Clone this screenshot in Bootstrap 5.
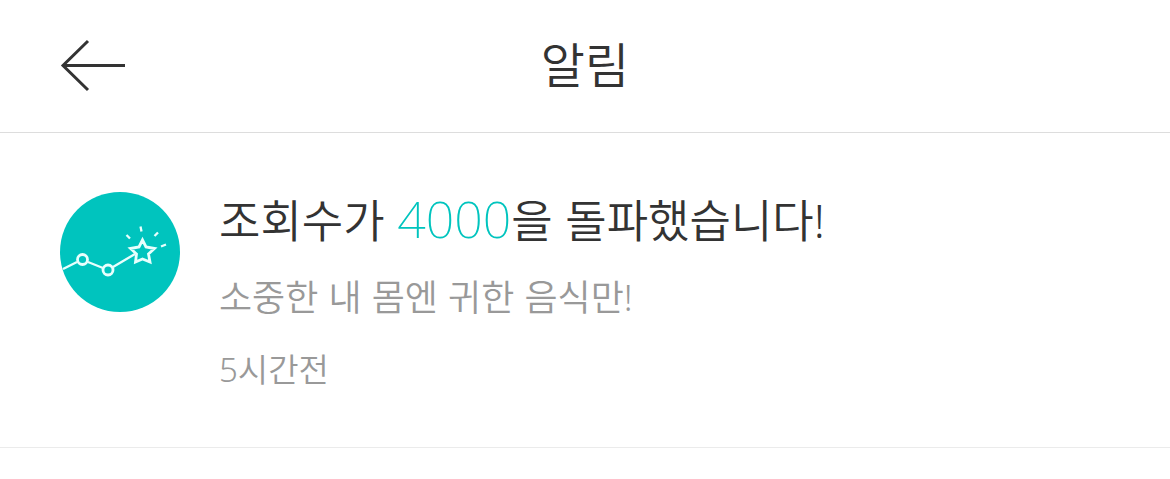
<!DOCTYPE html>
<html lang="ko">
<head>
<meta charset="utf-8">
<meta name="viewport" content="width=device-width, initial-scale=1">
<title>알림</title>
<link href="https://cdn.jsdelivr.net/npm/bootstrap@5.3.0/dist/css/bootstrap.min.css" rel="stylesheet">
<style>
body { font-family: Inter, "Noto Sans CJK KR", sans-serif; font-weight: 350; color: #333; background: #fff; }
.topbar { display: grid; grid-template-columns: 1fr auto 1fr; padding: 34px 48px; border-bottom: 1px solid #ddd; }
.topbar h1 { font-size: 48px; line-height: 64px; font-weight: 350; }
.notice { padding: 59px 60px 53px; gap: 39px; border-bottom: 1px solid #ebebeb; }
.notice-body { display: grid; gap: 26px; padding-top: 1px; }
.notice h2 { font-size: 45px; line-height: 56px; font-weight: 350; }
.count { color: #00c4be; font-family: "Noto Sans", sans-serif; font-size: 50px; line-height: 1; font-weight: 200; }
.detail { font-size: 36px; line-height: 44px; color: #999; }
.ago { font-family: "Noto Sans", "Noto Sans CJK KR", sans-serif; font-size: 33px; line-height: 48px; color: #999; }
.mark-end { font-family: "Noto Sans", sans-serif; font-weight: 300; }
</style>
</head>
<body>
<header class="topbar align-items-center">
<button type="button" class="btn border-0 p-0 ms-2 text-start" aria-label="뒤로"><svg class="d-block" width="76" height="54" viewBox="0 0 76 54" fill="none" stroke="#333" stroke-width="3"><path d="M32 2 7 26.500l25 24.500M7 26.500h62"/></svg></button>
<h1 class="m-0">알림</h1>
</header>
<main>
<article class="notice d-flex align-items-start">
<svg class="flex-shrink-0" width="120" height="120" viewBox="0 0 120 120" fill="none" stroke="#e8fffd" stroke-width="2.300" aria-hidden="true">
<circle cx="60" cy="60" r="60" fill="#00c4be" stroke="none"/>
<path d="M3 77 17 70M28 70 43 76M53 75 75 62"/>
<g stroke-width="2.800"><circle cx="22.500" cy="67.500" r="5"/><circle cx="48" cy="78" r="5"/>
<path d="m82.500 48 3.500 7 8.500 1.500-6 5.500 1.500 8-7.500-3-7 3 1-8-6-5.500 8.500-1.500z"/></g>
<path d="m66.500 43 3.500 3.500M80.500 34.500l1 5M98 40.500l-3.500 3.500M106 52.500l-5 2"/>
</svg>
<div class="notice-body">
<h2 class="m-0">조회수가 <span class="count">4000</span>을 돌파했습니다<span class="mark-end">!</span></h2>
<p class="detail m-0">소중한 내 몸엔 귀한 음식만<span class="mark-end">!</span></p>
<time class="ago d-block">5시간전</time>
</div>
</article>
</main>
<script src="https://cdn.jsdelivr.net/npm/bootstrap@5.3.0/dist/js/bootstrap.bundle.min.js"></script>
</body>
</html>
